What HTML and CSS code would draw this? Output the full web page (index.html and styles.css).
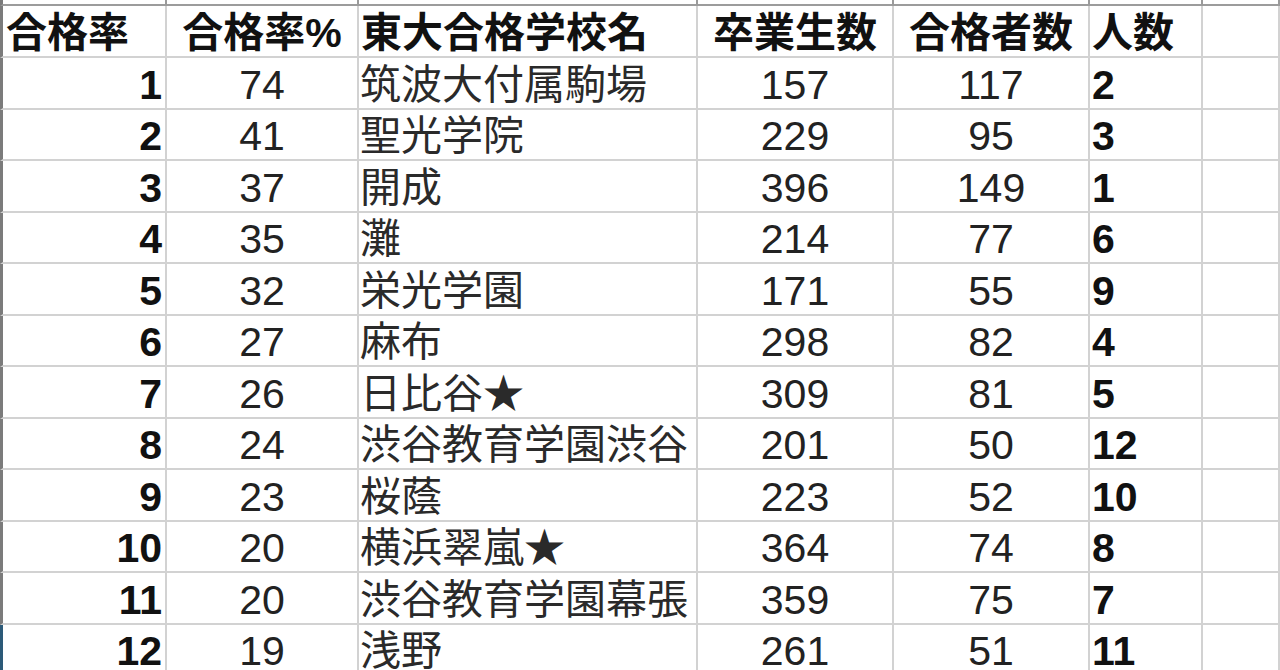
FILE: index.html
```html
<!DOCTYPE html>
<html lang="ja">
<head>
<meta charset="utf-8">
<title>東大合格率</title>
<link rel="stylesheet" href="styles.css">
</head>
<body>
<div class="sheet">
  <div class="c top first"></div><div class="c top"></div><div class="c top"></div><div class="c top"></div><div class="c top"></div><div class="c top"></div><div class="c top"></div>

  <div class="c hd first left">合格率</div>
  <div class="c hd center">合格率%</div>
  <div class="c hd left">東大合格学校名</div>
  <div class="c hd center">卒業生数</div>
  <div class="c hd center">合格者数</div>
  <div class="c hd left">人数</div>
  <div class="c hd"></div>

  <div class="c d first rank">1</div><div class="c d center">74</div><div class="c d name">筑波大付属駒場</div><div class="c d center">157</div><div class="c d center">117</div><div class="c d cnt">2</div><div class="c d"></div>
  <div class="c d first rank">2</div><div class="c d center">41</div><div class="c d name">聖光学院</div><div class="c d center">229</div><div class="c d center">95</div><div class="c d cnt">3</div><div class="c d"></div>
  <div class="c d first rank">3</div><div class="c d center">37</div><div class="c d name">開成</div><div class="c d center">396</div><div class="c d center">149</div><div class="c d cnt">1</div><div class="c d"></div>
  <div class="c d first rank">4</div><div class="c d center">35</div><div class="c d name">灘</div><div class="c d center">214</div><div class="c d center">77</div><div class="c d cnt">6</div><div class="c d"></div>
  <div class="c d first rank">5</div><div class="c d center">32</div><div class="c d name">栄光学園</div><div class="c d center">171</div><div class="c d center">55</div><div class="c d cnt">9</div><div class="c d"></div>
  <div class="c d first rank">6</div><div class="c d center">27</div><div class="c d name">麻布</div><div class="c d center">298</div><div class="c d center">82</div><div class="c d cnt">4</div><div class="c d"></div>
  <div class="c d first rank">7</div><div class="c d center">26</div><div class="c d name">日比谷★</div><div class="c d center">309</div><div class="c d center">81</div><div class="c d cnt">5</div><div class="c d"></div>
  <div class="c d first rank">8</div><div class="c d center">24</div><div class="c d name">渋谷教育学園渋谷</div><div class="c d center">201</div><div class="c d center">50</div><div class="c d cnt">12</div><div class="c d"></div>
  <div class="c d first rank">9</div><div class="c d center">23</div><div class="c d name">桜蔭</div><div class="c d center">223</div><div class="c d center">52</div><div class="c d cnt">10</div><div class="c d"></div>
  <div class="c d first rank">10</div><div class="c d center">20</div><div class="c d name">横浜翠嵐★</div><div class="c d center">364</div><div class="c d center">74</div><div class="c d cnt">8</div><div class="c d"></div>
  <div class="c d first rank">11</div><div class="c d center">20</div><div class="c d name">渋谷教育学園幕張</div><div class="c d center">359</div><div class="c d center">75</div><div class="c d cnt">7</div><div class="c d"></div>
  <div class="c d first rank sel">12</div><div class="c d center">19</div><div class="c d name">浅野</div><div class="c d center">261</div><div class="c d center">51</div><div class="c d cnt">11</div><div class="c d"></div>
</div>
</body>
</html>
```
FILE: styles.css
```css
html, body {
  margin: 0;
  padding: 0;
  background: #ffffff;
  overflow: hidden;
}

.sheet {
  display: grid;
  grid-template-columns: 167px 192px 339px 196px 196px 113px 1fr;
  grid-template-rows: 6px 52px repeat(12, 51.5px);
  width: 1280px;
  font-family: "Liberation Sans", "Noto Sans CJK JP", sans-serif;
  font-size: 41px;
  color: #222222;
}

.c {
  box-sizing: border-box;
  border-right: 2px solid #d2d2d2;
  border-bottom: 2px solid #d2d2d2;
  display: flex;
  align-items: center;
  white-space: nowrap;
  overflow: hidden;
  line-height: 1.1;
}

.first {
  border-left: 3px solid #7b7b7b;
}

.first.sel {
  border-left-color: #2c5a78;
}

.top {
  border-right-color: #9a9a9a;
  border-bottom-color: #9c9c9c;
}

.hd {
  font-weight: bold;
  color: #111111;
  padding-top: 6px;
}

.hd.left {
  justify-content: flex-start;
  padding-left: 2px;
}

.hd.first.left {
  padding-left: 3px;
}

.center {
  justify-content: center;
}

.d {
  padding-top: 5px;
}

.rank {
  justify-content: flex-end;
  padding-right: 3px;
  font-weight: bold;
  color: #111111;
}

.name {
  justify-content: flex-start;
  padding-left: 1px;
  color: #2a2a2a;
}

.cnt {
  justify-content: flex-start;
  padding-left: 2px;
  font-weight: bold;
  color: #111111;
}
```
